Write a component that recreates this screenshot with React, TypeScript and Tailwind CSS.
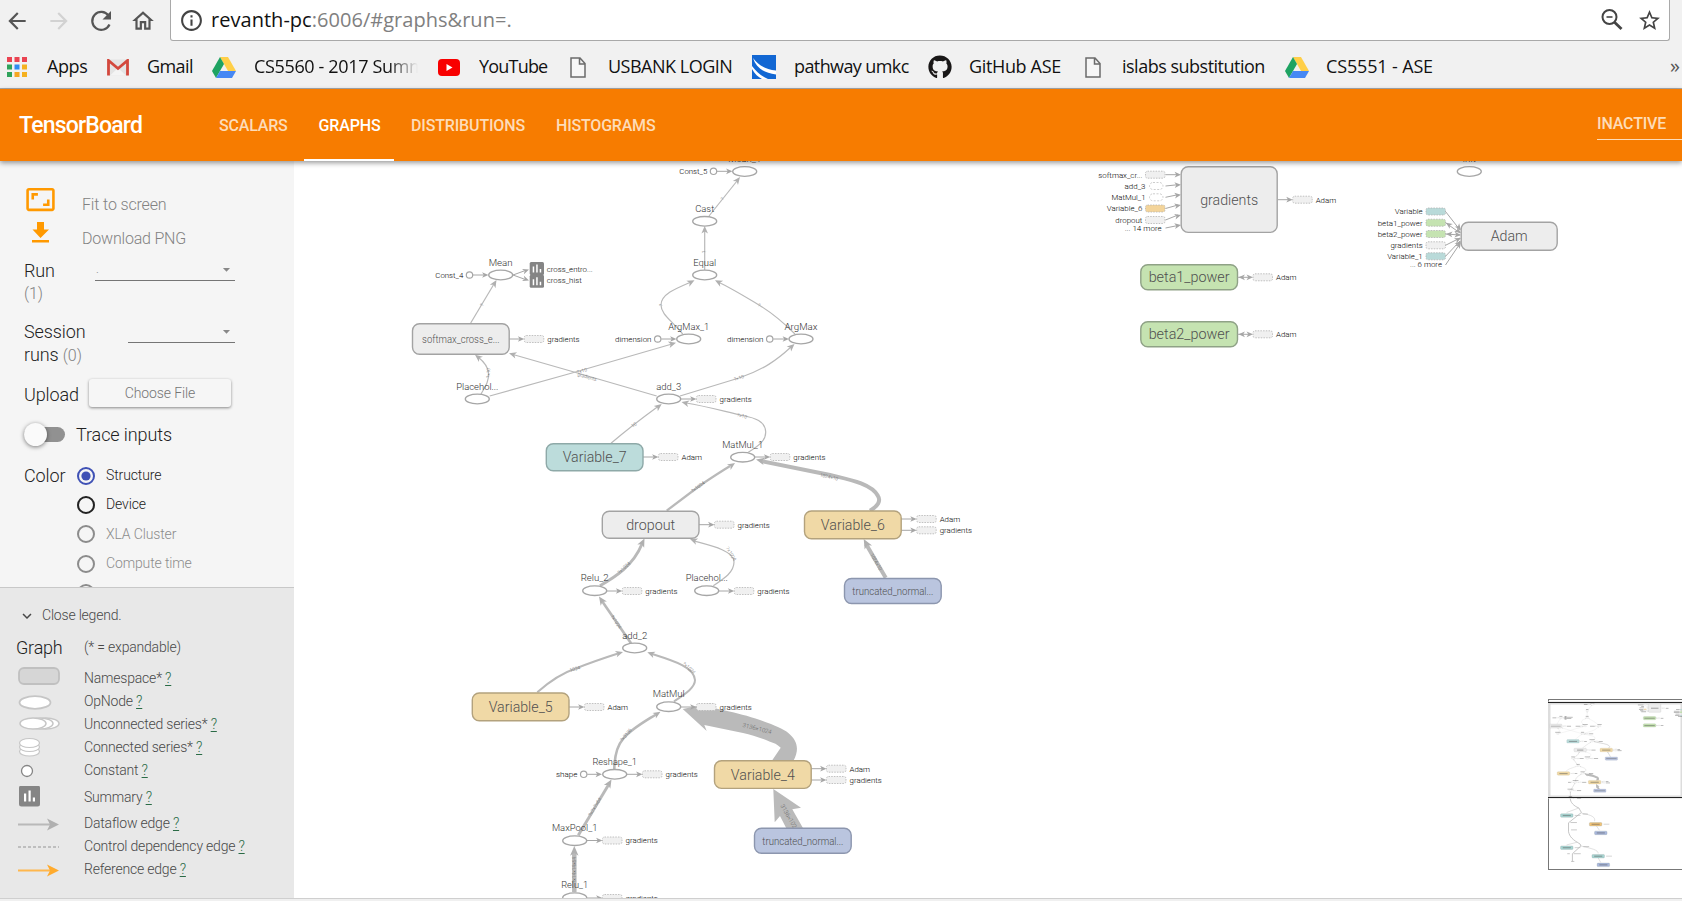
import React, { createContext, useContext } from "react";
import { MdArrowBack, MdArrowForward, MdRefresh, MdOutlineHome, MdInfoOutline, MdStarBorder, MdAspectRatio, MdExpandMore, MdArrowDropDown } from "react-icons/md";
import { FaGithub } from "react-icons/fa";

/* ---------- browser chrome icons ---------- */

function AppsIcon() {
  const colors = ["#ea4351", "#ea4351", "#ea4351", "#2fa35b", "#2f8cf0", "#f5b120", "#2fa35b", "#f5a623", "#f5b120"];
  return (
    <svg width="20" height="20" viewBox="0 0 20 20">
      {colors.map((c, i) => (
        <rect key={i} x={(i % 3) * 7.5} y={Math.floor(i / 3) * 7.5} width="5" height="5" fill={c} />
      ))}
    </svg>
  );
}

function GmailIcon() {
  return (
    <svg width="22" height="17" viewBox="0 0 22 17">
      <rect x="1" y="0.5" width="20" height="16" rx="1" fill="#e4e4e4" />
      <path d="M3 16.5 L11 9 L19 16.5Z" fill="#f4f4f4" />
      <path d="M1.5 16.5V1.5L11 9.5L20.500 1.5V16.5" fill="none" stroke="#d3483d" strokeWidth="2.8" />
    </svg>
  );
}

function DriveIcon() {
  return (
    <svg width="24" height="21" viewBox="0 0 24 21">
      <path d="M8 0H16L24 14H16Z" fill="#ffcf48" />
      <path d="M8 0L12 7L4 21L0 14Z" fill="#1ea362" />
      <path d="M8 14H24L20 21H4Z" fill="#4688f4" />
    </svg>
  );
}

function YoutubeIcon() {
  return (
    <svg width="22" height="17" viewBox="0 0 22 17">
      <rect width="22" height="17" rx="4" fill="#f80000" />
      <path d="M8.500 5L14.500 8.500L8.500 12Z" fill="#fff" />
    </svg>
  );
}

function DocIcon() {
  return (
    <svg width="16" height="21" viewBox="0 0 16 21">
      <path d="M1 1H10L15 6.500V20H1Z M9.500 1V7H15" fill="#f6f6f6" stroke="#6b6b6b" strokeWidth="1.500" />
    </svg>
  );
}

function PathwayIcon() {
  return (
    <svg width="24" height="24" viewBox="0 0 24 24">
      <rect width="24" height="24" fill="#1267d3" />
      <path d="M1 3C6 10 13 14 24 15.500V19.500C12 18 4 13 1 3Z" fill="#fff" />
      <path d="M0 11C5 18 10 21 16 24H10C6 22 3 19 0 14Z" fill="#fff" />
    </svg>
  );
}

function ZoomOutIcon() {
  return (
    <svg width="22" height="22" viewBox="0 0 22 22" fill="none" stroke="#444">
      <circle cx="8.500" cy="8" r="7" strokeWidth="2" />
      <path d="M5.500 8H11.500" strokeWidth="1.600" />
      <path d="M13.500 13.200L20.500 20" strokeWidth="2.800" />
    </svg>
  );
}

type BookmarkProps = { icon: React.ReactNode; iconBox: string; text: string; textBox: string };

function Bookmark({ icon, iconBox, text, textBox }: BookmarkProps) {
  return (
    <div className="flex shrink-0 items-center">
      <div className={"flex shrink-0 items-center " + iconBox}>{icon}</div>
      <span className={"mb-[2px] shrink-0 overflow-hidden whitespace-nowrap text-[18px] leading-6 text-[#111] " + textBox}>{text}</span>
    </div>
  );
}

function BrowserChrome() {
  return (
    <div className="h-[89px] shrink-0 border-b border-[#a9a9a9] bg-[#f1f1f1] font-['Open_Sans',sans-serif]">
      <div className="flex h-[41px]">
        <div className="flex w-[170px] shrink-0 items-center gap-[16px] pl-1 text-[26px] text-[#555]">
          <MdArrowBack />
          <MdArrowForward className="text-[#d2d2d2]" />
          <svg width="26" height="26" viewBox="0 0 26 26" fill="none">
            <path d="M21.500 16.500A9 9 0 1 1 20.500 7.500" stroke="#555" strokeWidth="2.200" />
            <path d="M23 3V11.500H14.500Z" fill="#555" />
          </svg>
          <MdOutlineHome />
        </div>
        <div className="flex w-[1500px] shrink-0 items-center rounded-b-[3px] border border-t-0 border-[#a9a9a9] bg-white pr-[7px] pl-[8px]">
          <MdInfoOutline className="text-[25px] text-[#444]" />
          <div className="flex-1 pl-[7px] text-[20px] tracking-[0.03px] text-[#808080]">
            <span className="text-[#111]">revanth-pc</span>:6006/#graphs&amp;run=.
          </div>
          <ZoomOutIcon />
          <MdStarBorder className="ml-[14px] text-[25px] text-[#444]" />
        </div>
      </div>
      <div className="flex h-[47px] items-center pt-[5px] pl-[7px]">
        <Bookmark icon={<AppsIcon />} iconBox="w-10" text="Apps" textBox="w-[60px] tracking-[-0.4px]" />
        <Bookmark icon={<GmailIcon />} iconBox="w-10" text="Gmail" textBox="w-[65px] tracking-[-0.6px]" />
        <Bookmark icon={<DriveIcon />} iconBox="w-[42px]" text="CS5560 - 2017 Summer" textBox="mr-[20px] w-[164px] tracking-[-0.35px] [mask-image:linear-gradient(to_right,black_82%,transparent)]" />
        <Bookmark icon={<YoutubeIcon />} iconBox="w-[41px]" text="YouTube" textBox="w-[91px] tracking-[-0.8px]" />
        <Bookmark icon={<DocIcon />} iconBox="w-[38px]" text="USBANK LOGIN" textBox="w-36 tracking-[-0.5px]" />
        <Bookmark icon={<PathwayIcon />} iconBox="w-[42px]" text="pathway umkc" textBox="w-[134px] tracking-[-0.6px]" />
        <Bookmark icon={<FaGithub className="text-[24px] text-[#191717]" />} iconBox="w-[41px]" text="GitHub ASE" textBox="w-[116px] tracking-[-0.35px]" />
        <Bookmark icon={<DocIcon />} iconBox="w-[37px]" text="islabs substitution" textBox="w-[163px] tracking-[-0.5px]" />
        <Bookmark icon={<DriveIcon />} iconBox="w-[41px]" text="CS5551 - ASE" textBox="w-[344px] tracking-[-0.15px]" />
        <span className="mb-[2px] text-[20px] leading-6 text-[#555]">»</span>
      </div>
    </div>
  );
}

function AppBar() {
  return (
    <header className="relative z-10 flex h-[72px] shrink-0 bg-[#f77c00] shadow-[0_2px_5px_rgba(0,0,0,0.4)]">
      <div className="flex w-[204px] shrink-0 items-center pt-[2px] pl-[19px] text-[23px] font-medium tracking-[-0.8px] text-white">TensorBoard</div>
      <nav className="flex flex-1 text-[16px] font-medium text-[#fddcb9]">
        <a className="flex w-[100px] items-center pt-[2px] pl-[15px] tracking-[-0.2px]">SCALARS</a>
        <a className="flex w-[90px] items-center justify-center border-b-2 border-white pt-[4px] pl-[1px] tracking-[-0.1px] text-white">GRAPHS</a>
        <a className="flex w-[147px] items-center pt-[2px] pl-[17px] tracking-[-0.15px]">DISTRIBUTIONS</a>
        <a className="flex items-center pt-[2px] pl-[15px] tracking-[-0.2px]">HISTOGRAMS</a>
      </nav>
      <div className="mt-[22px] h-[29px] w-[85px] shrink-0 border-b border-[#fddcb9] pt-[2px] text-[16px] leading-[22px] font-medium tracking-[-0.15px] text-[#fddcb9]">INACTIVE</div>
    </header>
  );
}

/* ---------- sidebar ---------- */

function Radio({ label, tone, checked }: { label?: string; tone: string; checked?: boolean }) {
  return (
    <div className={"flex h-[29.300px] items-center text-[14px] tracking-[-0.13px] " + tone}>
      <svg width="18" height="18" viewBox="0 0 18 18" className="mr-[11px]">
        <circle cx="9" cy="9" r="8" fill="none" stroke={checked ? "#3f51b5" : "currentColor"} strokeWidth="2" />
        {checked && <circle cx="9" cy="9" r="4.600" fill="#3f51b5" />}
      </svg>
      {label}
    </div>
  );
}

function Controls() {
  return (
    <div className="h-[426px] overflow-hidden pl-6 text-[18px] tracking-[-0.1px] text-[#222]">
      <div className="flex h-[56px] items-end text-[16px] text-[#828282]">
        <MdAspectRatio className="mb-[2px] ml-[1px] text-[31px] text-[#f90]" />
        <span className="ml-[26px] leading-6 tracking-[-0.15px]">Fit to screen</span>
      </div>
      <div className="flex h-[34px] items-end text-[16px] text-[#828282]">
        <svg width="18" height="21" viewBox="0 0 18 21" className="mb-[8px] ml-[8px]" fill="#f90">
          <path d="M5 0H12V7.500H17L8.500 16L0.500 7.500H5Z M0 18H17V20.500H0Z" />
        </svg>
        <span className="ml-[32px] leading-6 tracking-[-0.2px]">Download PNG</span>
      </div>
      <div className="flex h-[65px] pt-[8px]">
        <div className="w-[71px] leading-[24px]">
          <div>Run</div>
          <div className="text-[16px] leading-[22px] text-[#828282]">(1)</div>
        </div>
        <div className="-mt-[1px] flex h-[23px] w-[140px] items-center justify-between border-b border-[#757575] pl-px text-[12px] text-[#888]">
          <span>.</span>
          <MdArrowDropDown className="text-[17px]" />
        </div>
      </div>
      <div className="flex h-[61px] pt-[5px]">
        <div className="w-[104px] leading-[22.500px]">
          Session<br />runs <span className="text-[16px] text-[#828282]">(0)</span>
        </div>
        <div className="-mt-[1px] flex h-[23px] w-[107px] items-center justify-end border-b border-[#757575] text-[#888]">
          <MdArrowDropDown className="text-[17px]" />
        </div>
      </div>
      <div className="flex h-[35px] items-center">
        <span className="w-[65px]">Upload</span>
        <button className="mb-[3px] h-[28px] w-[142px] rounded-[3px] bg-[#f6f6f6] pt-[1px] text-[14px] text-[#757575] shadow-[0_1px_3px_rgba(0,0,0,0.45)]">Choose File</button>
      </div>
      <div className="flex h-[46px] items-center pb-[1px]">
        <div className="mr-[11px] flex h-[15px] w-[41px] items-center rounded-full bg-[#919191]">
          <div className="h-[23px] w-[23px] rounded-full bg-[#fafafa] shadow-[0_1px_4px_rgba(0,0,0,0.5)]" />
        </div>
        Trace inputs
      </div>
      <div className="flex h-[147px] pt-[3px]">
        <div className="w-[53px] leading-[29px]">Color</div>
        <div>
          <Radio label="Structure" tone="text-[#222]" checked />
          <Radio label="Device" tone="text-[#222]" />
          <Radio label="XLA Cluster" tone="text-[#8c8c8c]" />
          <Radio label="Compute time" tone="text-[#8c8c8c]" />
          <Radio tone="text-[#8c8c8c]" />
        </div>
      </div>
    </div>
  );
}

function LegendRow({ box, label, children }: { box: string; label: string; children: React.ReactNode }) {
  return (
    <div className={"flex items-center " + box}>
      <svg width="66" height="24" viewBox="0 0 66 24" className="shrink-0">{children}</svg>
      <span>
        {label} <span className="text-[#2a6b46] underline underline-offset-2">?</span>
      </span>
    </div>
  );
}

function Legend() {
  return (
    <div className="h-[311px] border-t border-[#c8c8c8] bg-[#e8e8e8] pl-[18px] text-[14px] tracking-[-0.2px] text-[#484848]">
      <div className="flex h-[55px] items-center">
        <MdExpandMore className="text-[18px]" />
        <span className="ml-[6px]">Close legend.</span>
      </div>
      <div className="-ml-[2px] flex h-[8px] items-center">
        <span className="w-[68px] text-[18px] text-[#222]">Graph</span>
        <span>(* = expandable)</span>
      </div>
      <div className="pt-[16px]">
        <LegendRow box="h-[23px]" label="Namespace*">
          <rect x="1" y="1" width="40" height="16" rx="5" fill="#d6d6d6" stroke="#c0c0c0" strokeWidth="1.800" />
        </LegendRow>
        <LegendRow box="h-[23px]" label="OpNode">
          <ellipse cx="17" cy="12.500" rx="15.500" ry="6.300" fill="#fff" stroke="#c6c6c6" strokeWidth="1.800" />
        </LegendRow>
        <LegendRow box="h-[23px]" label="Unconnected series*">
          {[28, 22, 15].map((x) => (
            <ellipse key={x} cx={x} cy="10.500" rx="13" ry="5.500" fill="#fff" stroke="#c6c6c6" strokeWidth="1.500" />
          ))}
        </LegendRow>
        <LegendRow box="h-[23px]" label="Connected series*">
          {[15.500, 11, 7].map((y) => (
            <ellipse key={y} cx="11.500" cy={y} rx="10" ry="4.500" fill="#fff" stroke="#c6c6c6" strokeWidth="1.200" />
          ))}
        </LegendRow>
        <LegendRow box="h-[23px]" label="Constant">
          <circle cx="9" cy="12" r="5.500" fill="#fff" stroke="#858585" strokeWidth="1.300" />
        </LegendRow>
        <LegendRow box="h-[31px]" label="Summary">
          <rect x="1" y="-0.500" width="21" height="21" rx="2.500" fill="#858585" />
          <path d="M6 7.500h2.200v8H6z M10.500 4.500h2.200v11h-2.200z M14.800 11.500H17v4h-2.200z" fill="#fff" />
        </LegendRow>
        <LegendRow box="h-[21px]" label="Dataflow edge">
          <path d="M0 12.500H32" stroke="#b9b9b9" strokeWidth="2" />
          <path d="M29 6.500L41 12.500L29 18.500L32 12.500Z" fill="#b0b0b0" />
        </LegendRow>
        <LegendRow box="h-[25px]" label="Control dependency edge">
          <path d="M0 12H41" stroke="#b0b0b0" strokeWidth="1.500" strokeDasharray="3 2" />
        </LegendRow>
        <LegendRow box="h-[21px]" label="Reference edge">
          <path d="M0 12.500H32" stroke="#ffb74d" strokeWidth="2" />
          <path d="M29 6.500L41 12.500L29 18.500L32 12.500Z" fill="#ffab2e" />
        </LegendRow>
      </div>
    </div>
  );
}

/* ---------- graph ---------- */

const EDGE = "#b9b9b9";
const STROKE = "#a6a6a6";

/* In the minimap labels are too small to read, so they are drawn as bars. */
const MiniContext = createContext(false);

function Label({ x, y, w, size, anchor = "middle", fill = "#333", children }: { x: number; y: number; w: number; size: number; anchor?: "start" | "middle" | "end"; fill?: string; children: string }) {
  const mini = useContext(MiniContext);
  if (mini) {
    const left = anchor === "start" ? x : anchor === "end" ? x - w : x - w / 2;
    return <rect x={left} y={y - size * 0.6} width={w} height={size * 0.6} fill={fill} opacity="0.45" />;
  }
  return (
    <text x={x} y={y} fontSize={size} textAnchor={anchor} textLength={w} lengthAdjust="spacingAndGlyphs" fill={fill}>
      {children}
    </text>
  );
}

function EdgeNote({ x, y, angle, size, children }: { x: number; y: number; angle: number; size: number; children?: string }) {
  const mini = useContext(MiniContext);
  if (mini) return null;
  return (
    <text transform={`translate(${x} ${y}) rotate(${angle})`} y="1.500" fontSize={size} textAnchor="middle" fill="#666">
      {children}
    </text>
  );
}

function Head({ x, y, angle, size = 7, fill = STROKE }: { x: number; y: number; angle: number; size?: number; fill?: string }) {
  return <path transform={`translate(${x} ${y}) rotate(${angle}) scale(${size / 7})`} d="M0 0L-7.500 -3.300L-5.500 0L-7.500 3.300Z" fill={fill} />;
}

function Op({ x, y, label, w }: { x: number; y: number; label?: string; w?: number }) {
  return (
    <g>
      <ellipse cx={x} cy={y} rx="12" ry="4.800" fill="#fff" stroke={STROKE} strokeWidth="1.300" />
      {label && <Label x={x} y={y - 9.400} w={w || 30} size={9}>{label}</Label>}
    </g>
  );
}

function Box({ x, y, w = 96.700, h, label, tw, size = 14, fill = "#ededed", stroke = "#a3a3a3" }: { x: number; y: number; w?: number; h: number; label: string; tw: number; size?: number; fill?: string; stroke?: string }) {
  return (
    <g>
      <rect x={x} y={y} width={w} height={h} rx="7" fill={fill} stroke={stroke} strokeWidth="1.400" />
      <Label x={x + w / 2} y={y + h / 2 + size * 0.34 + 0.4} w={tw} size={size} fill="#505050">{label}</Label>
    </g>
  );
}

function Stub({ x, y, fill = "#f0f0f0", oval }: { x: number; y: number; fill?: string; oval?: boolean }) {
  return oval ? (
    <rect x={x + 4} y={y - 3.500} width="13.500" height="7" rx="3.500" fill="#fff" stroke="#c0c0c0" strokeWidth="0.800" strokeDasharray="2 1.500" />
  ) : (
    <rect x={x} y={y - 3.500} width="19.500" height="7" rx="2" fill={fill} stroke="#b2b2b2" strokeWidth="0.800" strokeDasharray="1.500 1.200" />
  );
}

function Out({ from, x, y, text, both }: { from: number; x: number; y: number; text: string; both?: boolean }) {
  return (
    <g>
      <path d={`M${from} ${y}H${x - 4}`} stroke={STROKE} strokeWidth="1" />
      <Head x={x} y={y} angle={0} size={6} />
      {both && <Head x={from + 1} y={y} angle={180} size={6} />}
      <Stub x={x} y={y} />
      <Label x={x + 23} y={y + 2.900} w={text === "Adam" ? 20.500 : 32.300} size={7.500} anchor="start" fill="#000">{text}</Label>
    </g>
  );
}

function ConstIn({ x, y, to, text, w }: { x: number; y: number; to: number; text: string; w: number }) {
  return (
    <g>
      <path d={`M${x + 3.500} ${y}H${to - 4}`} stroke={STROKE} strokeWidth="1" />
      <Head x={to} y={y} angle={0} size={6} />
      <circle cx={x} cy={y} r="3.200" fill="#fff" stroke={STROKE} strokeWidth="1.200" />
      <Label x={x - 6.200} y={y + 2.900} w={w} size={7.500} anchor="end" fill="#000">{text}</Label>
    </g>
  );
}

type EdgeDef = { d: string; w: number; tip: [number, number, number]; note?: string; at?: [number, number, number]; hs?: number };

const edges: EdgeDef[] = [
  { d: "M470.700 323L494 284", w: 1.2, tip: [496.500, 280, -59], at: [482, 305, -59], note: "?" },
  { d: "M709 216L737 181", w: 1.2, tip: [740, 177, -52], at: [722.500, 199, -52], note: "?" },
  { d: "M704.700 270V230", w: 1.2, tip: [704.700, 226, -90], at: [704.700, 252, -90], note: "?" },
  { d: "M682.700 334C671 320 661 314 661 305C661 294 677 288 691 282", w: 1.2, tip: [694.500, 280.300, -27], at: [661, 305, -85], note: "?" },
  { d: "M795 334C785 324 774 314 759 305C744 296 731 288 718 282", w: 1.2, tip: [715, 280.300, 207], at: [759, 305, 32], note: "?" },
  { d: "M481 394C485 387 489 382 488.500 373C488 366 483 361 478 357", w: 1.2, tip: [475, 354.700, 218], at: [488.500, 373, -88], note: "?×10" },
  { d: "M489.700 396L572 373L672 344", w: 1.2, tip: [676, 342.700, -16], at: [582, 371, -16], note: "?×10" },
  { d: "M656.700 396L574 372L513 354.500", w: 1.2, tip: [509, 353.300, 196], at: [587, 377, 16], note: "gradients" },
  { d: "M680 396L739 378C763 370 777 360 791 347", w: 1.2, tip: [794.500, 344, -42], at: [739, 378, -19], note: "?×10" },
  { d: "M748.300 452.300C760 445 766 440 765.700 431.700C765 421 755 418 743 415.500C723 411 705 406 686 403", w: 1.2, tip: [681.500, 402, 194], at: [742, 416, 15], note: "?×10" },
  { d: "M611 443.300C623 433 634 424 658 406.500", w: 1.2, tip: [661.700, 404, -38], at: [634, 425, -38], note: "10" },
  { d: "M666.700 510.700L696.700 488C706 481 719 473 730 466", w: 2.2, tip: [735, 463, -34], at: [698, 487, -36], note: "?×1024" },
  { d: "M870 510.700C878 506 881 501 878 496C871 483 846 479 830 475L761 461", w: 4, tip: [756, 459.500, 193], hs: 8, at: [829, 477, 13], note: "1024×10" },
  { d: "M885.700 577.700L866 544", w: 4, tip: [863.700, 539, 241], hs: 9, at: [876, 562, 60], note: "1024×10" },
  { d: "M713.300 585.700C725 578 734 572 734 562C734 551 713 546 694 541", w: 1.2, tip: [690, 539, 200], at: [731, 554, 60], note: "?×1024" },
  { d: "M600 585.700C615 577 633 566 642 544", w: 2.9, tip: [644.500, 538.500, -64], hs: 8, at: [624, 568, -43], note: "?×1024" },
  { d: "M631 643.300L602 601", w: 2.6, tip: [599, 596.500, 236], hs: 8, at: [616, 622, 57], note: "?×1024" },
  { d: "M537.300 692.300C551 680 562 673 577 668C592 662 604 658 618 653.500", w: 2, tip: [623, 652, -17], at: [575, 669, -16], note: "1024" },
  { d: "M674 701.300C687 693 695 687 695 680C694 667 674 661 652 654", w: 2, tip: [647.300, 652.300, 200], at: [689, 668, 42], note: "?×1024" },
  { d: "M614.300 769.300C614.500 757 616 747 623 739C631 729 644 722 656 714.500", w: 2.6, tip: [660.500, 711.700, -32], at: [626, 735, -50], note: "?×3136" },
  { d: "M578.300 835.300L609 784", w: 2.9, tip: [611.500, 779.500, -59], hs: 8, at: [595, 807, -59], note: "?×7×7×64" },
  { d: "M574.300 892V852", w: 4.5, tip: [574.300, 846, -90], hs: 9, at: [574.300, 870, -90], note: "?×14×14×64" },
];

function GraphDrawing() {
  return (
    <g fontFamily="Roboto, sans-serif" fontWeight="300">
      {edges.map((e, i) => (
        <g key={i}>
          <path d={e.d} fill="none" stroke={EDGE} strokeWidth={e.w} />
          <Head x={e.tip[0]} y={e.tip[1]} angle={e.tip[2]} size={e.hs || 7} fill="#b0b0b0" />
        </g>
      ))}
      <path d="M682.700 709L712 703L706 706.500L723 710C737 713 748 716 760 720C774 725 784 729 788.300 733C797 740 800 749 793.300 761H771.700L780.700 747.700C777 744 774 743 770 741.700C761 738 752 735 743 733L704.300 725L706.700 731Z" fill="#bababa" />
      <path d="M773.300 789L801 807.700L792.300 809.300L803.500 829H786.700L780 816L774.700 822.300Z" fill="#bababa" />
      <EdgeNote x={757} y={729} angle={14} size={6}>3136×1024</EdgeNote>
      <EdgeNote x={789} y={818} angle={60} size={6}>3136×1024</EdgeNote>

      <Op x={744.700} y={171.500} label="Mean_1" w={33} />
      <Op x={704.700} y={221.300} label="Cast" w={19} />
      <Op x={704.700} y={275} label="Equal" w={23} />
      <Op x={500.700} y={275} label="Mean" w={24} />
      <Op x={688.700} y={339} label="ArgMax_1" w={41} />
      <Op x={801} y={339} label="ArgMax" w={33} />
      <Op x={477.300} y={399} label="Placehol..." w={42} />
      <Op x={668.700} y={399} label="add_3" w={25} />
      <Op x={742.700} y={457.200} label="MatMul_1" w={41} />
      <Op x={594.700} y={590.700} label="Relu_2" w={28} />
      <Op x={706.700} y={590.700} label="Placehol..." w={42} />
      <Op x={634.700} y={648} label="add_2" w={25} />
      <Op x={668.700} y={706.700} label="MatMul" w={32} />
      <Op x={614.700} y={774.300} label="Reshape_1" w={44.500} />
      <Op x={574.700} y={840.700} label="MaxPool_1" w={45.500} />
      <Op x={574.700} y={897.700} label="Relu_1" w={27} />
      <Op x={1469.300} y={171.500} label="init" w={13} />

      <ConstIn x={713.500} y={171.300} to={732.500} text="Const_5" w={28} />
      <ConstIn x={469.500} y={275} to={488.500} text="Const_4" w={28} />
      <ConstIn x={657.700} y={339} to={676.500} text="dimension" w={36.500} />
      <ConstIn x={769.700} y={339} to={789} text="dimension" w={36.500} />
      <ConstIn x={583.700} y={774.300} to={602} text="shape" w={21.500} />

      <path d="M513 275L524 271M513 275L524 279" stroke={STROKE} />
      <Head x={529} y={269.500} angle={-20} size={6} />
      <Head x={529} y={280.500} angle={20} size={6} />
      {[262, 274.800].map((y) => (
        <g key={y}>
          <rect x="529.700" y={y} width="14.300" height="13" rx="1.500" fill="#858585" />
          <path transform={`translate(529.700 ${y})`} d="M3 4.500h1.500v6H3z M6.500 2.500H8v8H6.500z M10 7h1.500v3.500H10z" fill="#fff" />
        </g>
      ))}
      <Label x={546.700} y={272.200} w={46} size={7.500} anchor="start" fill="#000">cross_entro...</Label>
      <Label x={546.700} y={283.200} w={35} size={7.500} anchor="start" fill="#000">cross_hist</Label>

      <Out from={509} x={524.300} y={339} text="gradients" />
      <Out from={680.700} x={696.500} y={399} text="gradients" />
      <Out from={643} x={658.500} y={457} text="Adam" />
      <Out from={754.700} x={770.300} y={457} text="gradients" />
      <Out from={699} x={714.500} y={524.700} text="gradients" />
      <Out from={901} x={916.700} y={519} text="Adam" />
      <Out from={901} x={916.700} y={530.300} text="gradients" />
      <Out from={606.700} x={622.300} y={591} text="gradients" />
      <Out from={718.700} x={734.300} y={591} text="gradients" />
      <Out from={569} x={584.500} y={707} text="Adam" />
      <Out from={680.300} x={696.500} y={707} text="gradients" />
      <Out from={626.300} x={642.500} y={774.300} text="gradients" />
      <Out from={811} x={826.500} y={768.700} text="Adam" />
      <Out from={811} x={826.500} y={780} text="gradients" />
      <Out from={586.300} x={602.500} y={840.500} text="gradients" />
      <Out from={586.300} x={602.500} y={898} text="gradients" />

      <Box x={412.500} y={323.700} h={30.600} label="softmax_cross_e..." tw={77.500} size={10} />
      <Box x={546.300} y={443.800} h={27} label="Variable_7" tw={64} fill="#bcdcdb" stroke="#8ea9a8" />
      <Box x={602.300} y={511.200} h={27} label="dropout" tw={49} />
      <Box x={804.500} y={511} h={27.700} label="Variable_6" tw={64} fill="#f0d9a6" stroke="#b3a27d" />
      <Box x={844.500} y={578.500} h={25} label="truncated_normal..." tw={81} size={10} fill="#bac5df" stroke="#8c96ae" />
      <Box x={472.300} y={693} h={27.700} label="Variable_5" tw={64} fill="#f0d9a6" stroke="#b3a27d" />
      <Box x={714.500} y={760.700} h={27.700} label="Variable_4" tw={64} fill="#f0d9a6" stroke="#b3a27d" />
      <Box x={754.500} y={828.300} h={25} label="truncated_normal..." tw={81} size={10} fill="#bac5df" stroke="#8c96ae" />

      <Box x={1181.200} y={166.700} w={96} h={65.700} label="gradients" tw={58} />
      <Out from={1278} x={1292.700} y={199.700} text="Adam" />
      <Box x={1140.800} y={264.700} h={25} label="beta1_power" tw={81} fill="#c5e3b1" stroke="#8fa286" />
      <Out from={1237.500} x={1253} y={277.300} text="Adam" both />
      <Box x={1140.800} y={321.700} h={25} label="beta2_power" tw={81} fill="#c5e3b1" stroke="#8fa286" />
      <Out from={1237.500} x={1253} y={334.300} text="Adam" both />
      {[
        { t: "softmax_cr...", w: 44, y: 174.7, ty: 174.7, x: 1142.300, f: "#f0f0f0" },
        { t: "add_3", w: 21, y: 186, ty: 184.7, x: 1145.500, f: "oval" },
        { t: "MatMul_1", w: 34, y: 197.3, ty: 194.7, x: 1145.500, f: "oval" },
        { t: "Variable_6", w: 35.500, y: 208.500, ty: 205, x: 1142.300, f: "#f3d49a" },
        { t: "dropout", w: 27, y: 220, ty: 215, x: 1142.300, f: "#f0f0f0" },
      ].map((n) => (
        <g key={n.t}>
          <Stub x={1145.500} y={n.y} fill={n.f} oval={n.f === "oval"} />
          <path d={`M1165.500 ${n.y}L1178 ${n.ty}`} stroke={STROKE} />
          <Head x={1181} y={n.ty} angle={(n.ty - n.y) * 3.200} size={6} />
          <Label x={n.x} y={n.y + 2.900} w={n.w} size={7.500} anchor="end" fill="#000">{n.t}</Label>
        </g>
      ))}
      <path d="M1165.500 228L1178 225.500" stroke={STROKE} />
      <Head x={1181} y={225} angle={-10} size={6} />
      <Label x={1161.700} y={231} w={37} size={7.500} anchor="end" fill="#000">... 14 more</Label>

      <Box x={1461.200} y={222.200} w={96} h={28} label="Adam" tw={37} />
      {[
        { t: "Variable", w: 28, y: 211.500, ty: 230, f: "#b9dad9", back: false },
        { t: "beta1_power", w: 45, y: 222.700, ty: 233, f: "#c5e3b1", back: true },
        { t: "beta2_power", w: 45, y: 234, ty: 235, f: "#c5e3b1", back: true },
        { t: "gradients", w: 32.300, y: 245.300, ty: 238, f: "#f0f0f0", back: false },
        { t: "Variable_1", w: 35.500, y: 256.300, ty: 241, f: "#b9dad9", back: false },
      ].map((n) => {
        const angle = (Math.atan2(n.ty - n.y, 15) * 180) / Math.PI;
        return (
          <g key={n.t}>
            <Stub x={1426} y={n.y} fill={n.f} />
            <path d={`M1445.500 ${n.y}L1460 ${n.ty}`} stroke={STROKE} />
            <Head x={1461} y={n.ty} angle={angle} size={6} />
            {n.back && <Head x={1446} y={n.y} angle={angle + 180} size={6} />}
            <Label x={1422.700} y={n.y + 2.900} w={n.w} size={7.500} anchor="end" fill="#000">{n.t}</Label>
          </g>
        );
      })}
      <path d="M1445.500 265L1459 245" stroke={STROKE} />
      <Head x={1461} y={242} angle={-56} size={6} />
      <Label x={1442} y={267} w={32} size={7.500} anchor="end" fill="#000">... 6 more</Label>

      {edges.map((e, i) =>
        e.at ? <EdgeNote key={i} x={e.at[0]} y={e.at[1]} angle={e.at[2]} size={4.8}>{e.note}</EdgeNote> : null
      )}
    </g>
  );
}

/* Nodes that lie below the visible part of the graph; only the minimap shows them. */
function LowerGraph() {
  const boxes = [
    { x: 498, y: 1020, f: "#a9d6d3" },
    { x: 722, y: 1088, f: "#f1c377" },
    { x: 762, y: 1155, f: "#a9b8dd" },
    { x: 498, y: 1270, f: "#a9d6d3" },
    { x: 742, y: 1336, f: "#a9d6d3" },
    { x: 782, y: 1403, f: "#a9b8dd" },
  ];
  return (
    <g>
      <path d="M574 902C574 930 600 960 640 975L660 1010L560 1090V1160C570 1200 590 1220 650 1255L656 1270L590 1330V1390" fill="none" stroke="#b5b5b5" strokeWidth="6" />
      <path d="M545 1010L640 975M660 1015C740 1030 770 1045 762 1078M800 1148L775 1112M545 1262L630 1240M656 1270C740 1290 790 1300 790 1328M810 1398L790 1362" fill="none" stroke="#c5c5c5" strokeWidth="4" />
      {boxes.map((b, i) => (
        <g key={i}>
          <rect x={b.x} y={b.y} width="97" height="27" rx="7" fill={b.f} stroke="#8b9a9a" strokeWidth="2" />
          <rect x={b.x + 17} y={b.y + 9} width="63" height="9" fill="#505050" opacity="0.45" />
          {i % 3 !== 2 && <path d={`M${b.x + 110} ${b.y + 13}H${b.x + 155}`} stroke="#aaa" strokeWidth="4" />}
        </g>
      ))}
      <path d="M670 1022H710M575 1088H625M580 1145H625M675 1275H720M600 1330H655M550 1330H570M580 1390H605" stroke="#aaa" strokeWidth="5" />
    </g>
  );
}

function Minimap() {
  return (
    <svg className="absolute right-0 bottom-[28px] h-[171px] w-[134px]" viewBox="1548 699 134 171">
      <rect x="1548.500" y="699.500" width="140" height="170" fill="#fff" stroke="#777" />
      <rect x="1549" y="703" width="133" height="94" fill="none" stroke="#ddd" strokeWidth="3" />
      <g transform="translate(1496.400 682.400) scale(0.1288)">
        <MiniContext.Provider value={true}>
          <GraphDrawing />
        </MiniContext.Provider>
        <LowerGraph />
      </g>
      <path d="M1548 702.500H1682M1548 797.500H1682" stroke="#222" strokeWidth="1.200" />
    </svg>
  );
}

export default function App() {
  return (
    <div className="flex h-[901px] w-[1682px] flex-col overflow-hidden bg-white font-['Roboto',sans-serif]">
      <BrowserChrome />
      <AppBar />
      <div className="flex h-[737px] shrink-0">
        <aside className="w-[294px] shrink-0 bg-[#f5f5f5] font-light">
          <Controls />
          <Legend />
        </aside>
        <main className="relative flex-1 overflow-hidden bg-white">
          <svg width="1388" height="737" viewBox="294 161 1388 737">
            <GraphDrawing />
          </svg>
          <Minimap />
        </main>
      </div>
      <div className="h-[3px] border-t border-[#cfcfcf] bg-[#f0f0f0]" />
    </div>
  );
}
